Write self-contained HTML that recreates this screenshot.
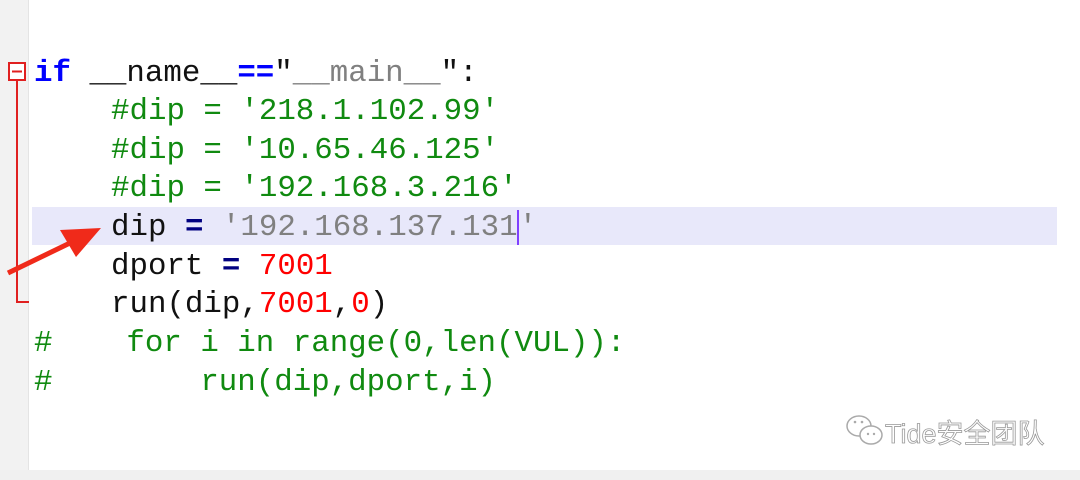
<!DOCTYPE html><html><head><style>
body{margin:0;width:1080px;height:480px;background:#fff;position:relative;overflow:hidden;font-family:"Liberation Mono",monospace;}
.g{position:absolute;left:0;top:0;width:28px;height:470px;background:#f2f2f2;border-right:1px solid #e4e4e4}
.l{position:absolute;font-size:30.8px;line-height:38px;white-space:pre;color:#111}
.k{color:#0000ff;font-weight:bold}.o{color:#000080;font-weight:bold}.c{color:#108a10}.s{color:#808080}.n{color:#ff0000}
.hl{position:absolute;left:32px;top:207px;width:1025px;height:38px;background:#e8e8fa}
.bot{position:absolute;left:0;top:470px;width:1080px;height:10px;background:#f0f0f0}
</style></head><body>
<div class="g"></div><div class="hl"></div><div class="bot"></div>
<svg style="position:absolute;left:0;top:0" width="120" height="320">
<rect x="9" y="63" width="16" height="17" fill="#fff" stroke="#e02020" stroke-width="2"/>
<line x1="12" y1="71.5" x2="22" y2="71.5" stroke="#e02020" stroke-width="2"/>
<line x1="17" y1="80" x2="17" y2="302" stroke="#e02020" stroke-width="2"/>
<line x1="16" y1="302" x2="29" y2="302" stroke="#e02020" stroke-width="2"/>
<line x1="8" y1="273" x2="70" y2="243" stroke="#f02a1a" stroke-width="5"/>
<polygon points="101,228 60,230 76,257" fill="#f02a1a"/>
</svg>
<div class="l" style="left:34px;top:55px"><span class="k">if</span> __name__<span class="k">==</span>"<span class="s">__main__</span>":</div>
<div class="l c" style="left:111px;top:93px">#dip = '218.1.102.99'</div>
<div class="l c" style="left:111px;top:132px">#dip = '10.65.46.125'</div>
<div class="l c" style="left:111px;top:170px">#dip = '192.168.3.216'</div>
<div class="l" style="left:111px;top:209px">dip <span class="o">=</span> <span class="s">'192.168.137.131</span><span style="border-left:2px solid #8040ff;margin-left:-1px"></span><span class="s">'</span></div>
<div class="l" style="left:111px;top:248px">dport <span class="o">=</span> <span class="n">7001</span></div>
<div class="l" style="left:111px;top:286px">run(dip,<span class="n">7001</span>,<span class="n">0</span>)</div>
<div class="l c" style="left:34px;top:325px">#    for i in range(0,len(VUL)):</div>
<div class="l c" style="left:34px;top:364px">#        run(dip,dport,i)</div>
<div style="position:absolute;left:845px;top:412px;font-family:'Liberation Sans','Noto Sans CJK SC',sans-serif;font-size:27px;color:#fff;-webkit-text-stroke:0.8px #999;white-space:nowrap">
<svg width="40" height="36" style="vertical-align:-6px"><ellipse cx="14" cy="13" rx="12" ry="10" fill="none" stroke="#aaa" stroke-width="1.5"/><ellipse cx="26" cy="22" rx="11" ry="9" fill="#fff" stroke="#aaa" stroke-width="1.5"/><circle cx="10" cy="9" r="1.3" fill="#aaa"/><circle cx="17" cy="9" r="1.3" fill="#aaa"/><circle cx="23" cy="21" r="1.2" fill="#aaa"/><circle cx="29" cy="21" r="1.2" fill="#aaa"/></svg>Tide安全团队</div>
</body></html>
